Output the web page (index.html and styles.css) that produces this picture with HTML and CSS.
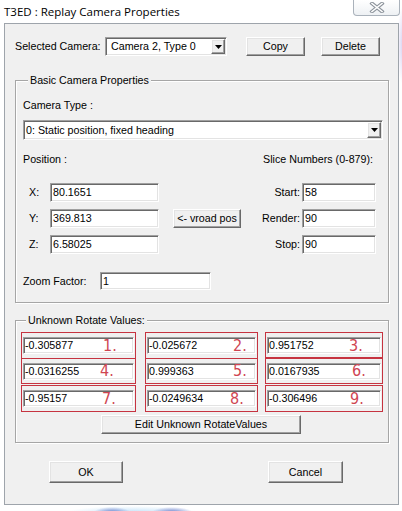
FILE: index.html
```html
<!DOCTYPE html>
<html>
<head>
<meta charset="utf-8">
<title>T3ED : Replay Camera Properties</title>
<link rel="stylesheet" href="styles.css">
</head>
<body>
<div class="titlebar">
  <span class="title">T3ED : Replay Camera Properties</span>
  <span class="close">
    <svg width="16" height="11" viewBox="0 0 16 11">
      <path d="M3 1.5 L13 9.5 M13 1.5 L3 9.5" stroke="#8d949c" stroke-width="3.6" stroke-linecap="square" fill="none"/>
      <path d="M3 1.5 L13 9.5 M13 1.5 L3 9.5" stroke="#ffffff" stroke-width="1.6" stroke-linecap="square" fill="none"/>
    </svg>
  </span>
</div>
<div class="client">
  <div class="toprow">
    <span class="lbl sel">Selected Camera:</span>
    <div class="combo cam"><span class="cval">Camera 2, Type 0</span><span class="arrow"><svg width="7" height="4" viewBox="0 0 7 4"><polygon points="0,0 7,0 3.5,4" fill="#000"/></svg></span></div>
    <div class="btn copy">Copy</div>
    <div class="btn delete">Delete</div>
  </div>

  <div class="group g1">
    <span class="legend">Basic Camera Properties</span>
    <div class="camtype">Camera Type :</div>
    <div class="combo type"><span class="cval tv">0: Static position, fixed heading</span><span class="arrow"><svg width="7" height="4" viewBox="0 0 7 4"><polygon points="0,0 7,0 3.5,4" fill="#000"/></svg></span></div>
    <div class="posrow"><span>Position :</span><span>Slice Numbers (0-879):</span></div>
    <div class="coords">
      <span class="c1">X:</span><div class="field c2">80.1651</div>
      <span class="c5">Start:</span><div class="field c6">58</div>
      <span class="c1">Y:</span><div class="field c2">369.813</div>
      <div class="btn c4 vroad">&lt;- vroad pos</div>
      <span class="c5">Render:</span><div class="field c6">90</div>
      <span class="c1">Z:</span><div class="field c2">6.58025</div>
      <span class="c5">Stop:</span><div class="field c6">90</div>
    </div>
    <div class="zoomrow"><span class="zl">Zoom Factor:</span><div class="field zf">1</div></div>
  </div>

  <div class="group g2">
    <span class="legend">Unknown Rotate Values:</span>
    <div class="rot">
      <div class="rrow r1">
        <div class="rbox a"><div class="field rf">-0.305877</div><span class="num n1">1.</span></div>
        <div class="rbox b"><div class="field rf">-0.025672</div><span class="num n2">2.</span></div>
        <div class="rbox c thickb"><div class="field rf">0.951752</div><span class="num n3">3.</span></div>
      </div>
      <div class="rrow r2">
        <div class="rbox a"><div class="field rf">-0.0316255</div><span class="num n4">4.</span></div>
        <div class="rbox b"><div class="field rf">0.999363</div><span class="num n5">5.</span></div>
        <div class="rbox c"><div class="field rf">0.0167935</div><span class="num n6">6.</span></div>
      </div>
      <div class="rrow r3">
        <div class="rbox a"><div class="field rf">-0.95157</div><span class="num n7">7.</span></div>
        <div class="rbox b"><div class="field rf">-0.0249634</div><span class="num n8">8.</span></div>
        <div class="rbox c"><div class="field rf">-0.306496</div><span class="num n9">9.</span></div>
      </div>
    </div>
    <div class="btn edit">Edit Unknown RotateValues</div>
  </div>

  <div class="okrow">
    <div class="btn ok">OK</div>
    <div class="btn cancel">Cancel</div>
  </div>
</div>
</body>
</html>
```
FILE: styles.css
```css
* { box-sizing: border-box; }
html, body { margin: 0; padding: 0; }
body {
  width: 402px;
  height: 511px;
  overflow: hidden;
  font-family: "Liberation Sans", Arial, sans-serif;
  font-size: 10.7px;
  line-height: 13px;
  color: #000;
  background:
    radial-gradient(ellipse 18px 5px at 112px 512px, rgba(70,95,190,0.7), rgba(70,95,190,0) 100%),
    radial-gradient(ellipse 20px 5px at 172px 512px, rgba(65,85,185,0.7), rgba(65,85,185,0) 100%),
    radial-gradient(ellipse 65px 6px at 132px 512px, rgba(160,210,245,0.6), rgba(160,210,245,0) 100%),
    radial-gradient(ellipse 6px 40px at 403px 45px, rgba(180,170,230,0.55), rgba(180,170,230,0) 100%),
    #ffffff;
}

/* title bar */
.titlebar {
  height: 23px;
  display: flex;
  justify-content: space-between;
  align-items: flex-start;
}
.title {
  font-family: "Open Sans", "Noto Sans", sans-serif;
  font-size: 11.5px;
  line-height: 16px;
  margin: 4px 0 0 4px;
  color: #000;
}
.close {
  width: 47px;
  height: 16px;
  margin-right: 2px;
  border: 1px solid #aab2bb;
  border-top: none;
  border-radius: 0 0 4px 4px;
  background: linear-gradient(#ffffff, #eef1f4);
  display: flex;
  align-items: center;
  justify-content: center;
}

/* client area */
.client {
  margin: 0 3px 0 4px;
  height: 482px;
  border: 1px solid #9ea4ab;
  background: #f0f0f0;
  padding-top: 13px;
  display: flex;
  flex-direction: column;
}

/* classic controls */
.btn {
  display: flex;
  align-items: center;
  justify-content: center;
  background: #f0f0f0;
  border: 1px solid;
  border-color: #ffffff #696969 #696969 #ffffff;
  box-shadow: inset -1px -1px 0 #a0a0a0, inset 1px 1px 0 #e3e3e3;
  white-space: nowrap;
}
.field {
  display: flex;
  align-items: center;
  background: #ffffff;
  border: 1px solid;
  border-color: #a0a0a0 #ffffff #ffffff #a0a0a0;
  box-shadow: inset 1px 1px 0 #696969, inset -1px -1px 0 #e3e3e3;
  padding-left: 2px;
  white-space: nowrap;
}
.combo {
  display: flex;
  align-items: stretch;
  background: #ffffff;
  border: 1px solid;
  border-color: #a0a0a0 #ffffff #ffffff #a0a0a0;
  box-shadow: inset 1px 1px 0 #696969, inset -1px -1px 0 #e3e3e3;
  padding: 1px;
}
.cval {
  flex: 1;
  display: flex;
  align-items: center;
  padding-left: 4px;
  white-space: nowrap;
}
.cval.tv { padding-left: 1px; }
.arrow {
  width: 14px;
  display: flex;
  align-items: center;
  justify-content: center;
  background: #f0f0f0;
  border: 1px solid;
  border-color: #ffffff #696969 #696969 #ffffff;
  box-shadow: inset -1px -1px 0 #a0a0a0, inset 1px 1px 0 #e3e3e3;
}

/* top row */
.toprow {
  display: flex;
  align-items: center;
  height: 19px;
  padding-left: 10px;
}
.sel { width: 90px; }
.combo.cam { width: 122px; height: 19px; }
.copy { margin-left: 19px; width: 59px; height: 19px; }
.delete { margin-left: 16px; width: 59px; height: 19px; }

/* group boxes */
.group {
  margin: 0 9px 0 10px;
  border: 1px solid #a6a6a6;
  box-shadow: 1px 1px 0 #ffffff, inset 1px 1px 0 #ffffff;
  display: flex;
  flex-direction: column;
}
.legend {
  align-self: flex-start;
  margin: -7px 0 0 5px;
  padding: 0 2px;
  background: #f0f0f0;
  line-height: 13px;
}
.g1 { margin-top: 24px; padding: 0 0 12px 7px; }
.camtype { margin-top: 12px; }
.combo.type { margin-top: 8px; width: 360px; height: 20px; }
.posrow {
  margin-top: 13px;
  display: flex;
  justify-content: space-between;
  padding-right: 15px;
}
.coords {
  margin-top: 17px;
  display: grid;
  grid-template-columns: 27px 109px 14px 68px 61px 74px;
  grid-auto-rows: 19px;
  row-gap: 7px;
  align-items: center;
}
.coords .c1 { grid-column: 1; padding-left: 6px; }
.coords .c2 { grid-column: 2; height: 19px; }
.coords .c4 { grid-column: 4; height: 19px; }
.coords .c5 { grid-column: 5; text-align: right; padding-right: 2px; }
.coords .c6 { grid-column: 6; height: 19px; }
.zoomrow {
  margin-top: 18px;
  display: flex;
  align-items: center;
  height: 18px;
}
.zl { width: 77px; }
.field.zf { width: 111px; height: 18px; }

.g2 { margin-top: 17px; padding: 0 0 8px 5px; }
.rot {
  margin-top: 5px;
  display: flex;
  flex-direction: column;
}
.rrow { display: flex; }
.rrow.r1 .rbox { height: 27px; }
.rrow.r2 { margin-top: -1px; }
.rrow.r2 .rbox { height: 26px; }
.rrow.r3 { margin-top: 1px; }
.rrow.r3 .rbox { height: 27px; }
.rbox {
  position: relative;
  border: 1px solid #c63340;
  display: flex;
  align-items: center;
  padding: 0 1px;
}
.rbox.a { width: 115px; }
.rbox.b { width: 113px; margin-left: 9px; }
.rbox.c { width: 118px; margin-left: 7px; }
.rbox.thickb { border-bottom: 2px solid #c63340; }
.field.rf { flex: 1; height: 17px; padding-left: 1px; }
.num {
  position: absolute;
  top: 4px;
  font-family: "Liberation Sans Narrow", "DejaVu Sans Condensed", "Liberation Sans", sans-serif;
  font-size: 16px;
  line-height: 17px;
  color: #cf4552;
}
.n1 { left: 81px; }
.n2 { left: 87px; }
.n3 { left: 83px; }
.n4 { left: 78px; top: 3px; }
.n5 { left: 87px; top: 3px; }
.n6 { left: 86px; top: 3px; }
.n7 { left: 80px; }
.n8 { left: 84px; }
.n9 { left: 84px; }

.edit {
  align-self: flex-start;
  margin: 3px 0 0 80px;
  width: 200px;
  height: 19px;
}

.okrow {
  margin-top: 18px;
  display: flex;
  padding-left: 44px;
}
.ok { width: 74px; height: 22px; }
.cancel { width: 75px; height: 22px; margin-left: 145px; }
```
